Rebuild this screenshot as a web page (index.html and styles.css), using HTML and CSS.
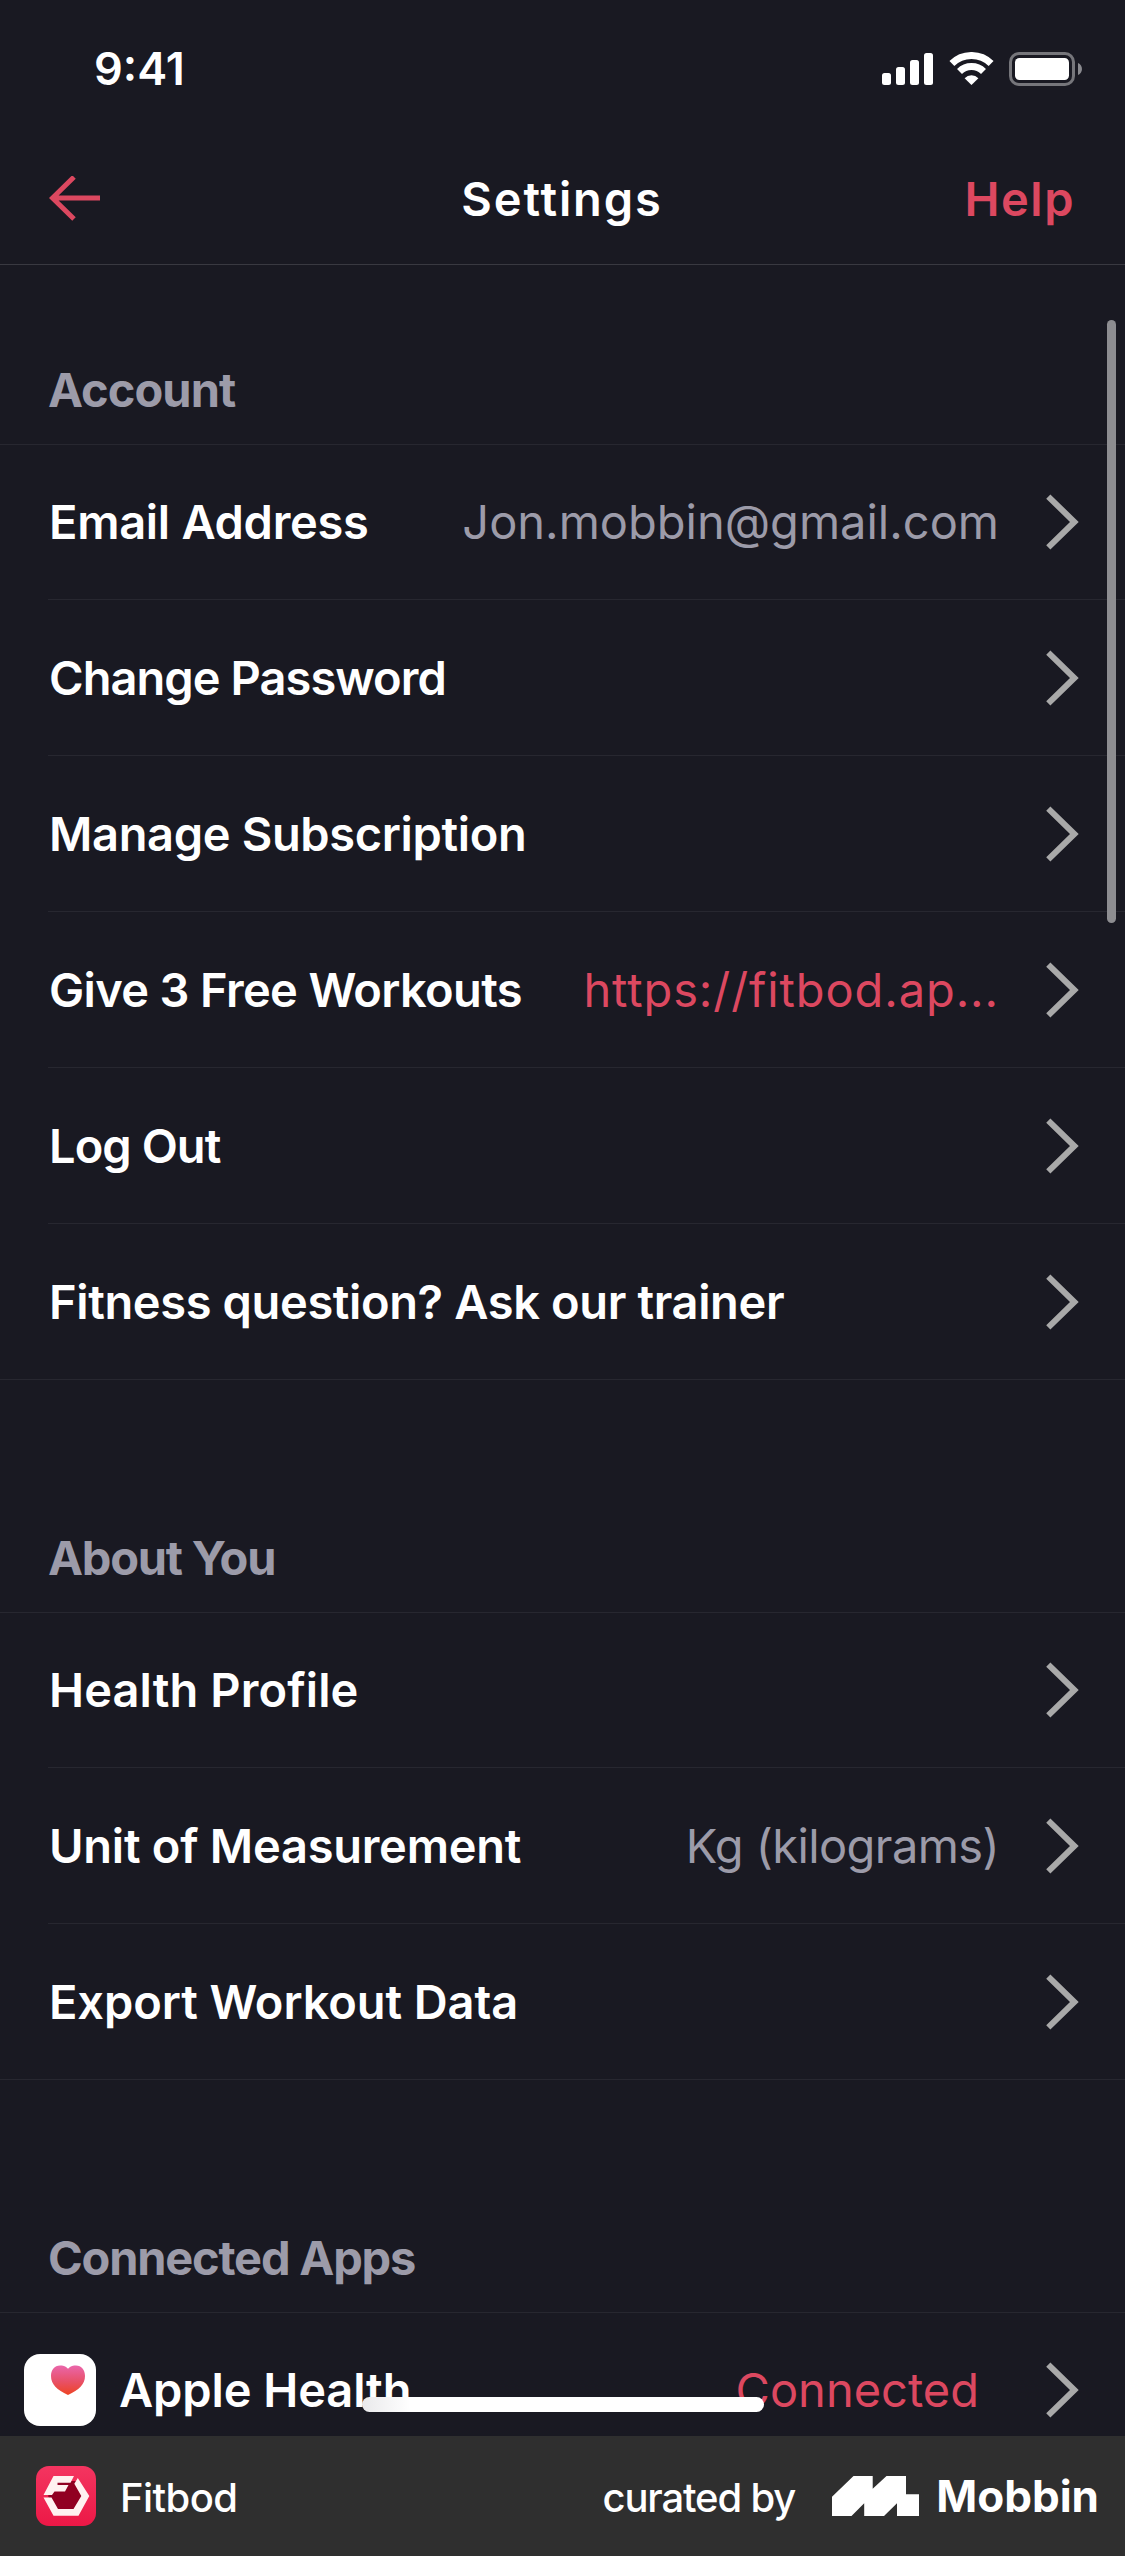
FILE: index.html
```html
<!DOCTYPE html>
<html lang="en">
<head>
<meta charset="utf-8">
<meta name="viewport" content="width=device-width">
<title>Settings</title>
<link rel="stylesheet" href="styles.css">
</head>
<body>
<svg class="defs" aria-hidden="true">
  <symbol id="chevron" viewBox="0 0 33 56"><path d="M2.3 2.6 28.4 28 2.3 53.4" fill="none" stroke="#a9a9a9" stroke-width="6"/></symbol>
</svg>
<div class="screen">
  <header class="top">
    <div class="status">
      <span class="time">9:41</span>
      <div class="status-icons">
        <svg class="signal" viewBox="0 0 51 34" fill="#fff"><rect y="21" width="9" height="12" rx="2.5"/><rect x="14" y="15" width="9" height="18" rx="2.5"/><rect x="28" y="8" width="9" height="25" rx="2.5"/><rect x="42" y="1" width="9" height="32" rx="2.5"/></svg>
        <svg class="wifi" viewBox="0 0 45 34"><path d="M2.9 11.5A28 28 0 0 1 42.1 11.5M10.5 19.4A17 17 0 0 1 34.5 19.4" fill="none" stroke="#fff" stroke-width="7"/><path d="M22.5 33 15.6 26.2A9.8 9.8 0 0 1 29.4 26.2Z" fill="#fff"/></svg>
        <svg class="battery" viewBox="0 0 74 34"><rect x="1.5" y="1.5" width="63" height="31" rx="8.5" fill="none" stroke="#76767b" stroke-width="3"/><rect x="6" y="6" width="54" height="22" rx="4.5" fill="#fff"/><path d="M69 11c5.300 2 5.300 10 0 12z" fill="#8a8a8f"/></svg>
      </div>
    </div>
    <nav class="nav">
      <svg class="back" viewBox="0 0 52 46" fill="none" stroke="#dc4860" stroke-width="5"><path d="M3 22H51M25 1 3.500 22 25 43"/></svg>
      <h1 class="title">Settings</h1>
      <a class="help">Help</a>
    </nav>
  </header>
  <main class="list">
    <h2 class="section first t-account">Account</h2>
    <div class="row short"><span class="label t-email">Email Address</span><span class="value">Jon.mobbin@gmail.com</span><svg class="chev"><use href="#chevron"/></svg></div>
    <div class="row"><span class="label t-password">Change Password</span><svg class="chev"><use href="#chevron"/></svg></div>
    <div class="row"><span class="label t-manage">Manage Subscription</span><svg class="chev"><use href="#chevron"/></svg></div>
    <div class="row"><span class="label t-give">Give 3 Free Workouts</span><span class="value link t-url">https://fitbod.ap...</span><svg class="chev"><use href="#chevron"/></svg></div>
    <div class="row"><span class="label t-logout">Log Out</span><svg class="chev"><use href="#chevron"/></svg></div>
    <div class="row last"><span class="label t-fitness">Fitness question? Ask our trainer</span><svg class="chev"><use href="#chevron"/></svg></div>

    <h2 class="section t-about">About You</h2>
    <div class="row short"><span class="label t-health">Health Profile</span><svg class="chev"><use href="#chevron"/></svg></div>
    <div class="row"><span class="label t-unit">Unit of Measurement</span><span class="value t-kg">Kg (kilograms)</span><svg class="chev"><use href="#chevron"/></svg></div>
    <div class="row last"><span class="label t-export">Export Workout Data</span><svg class="chev"><use href="#chevron"/></svg></div>

    <h2 class="section t-connected">Connected Apps</h2>
    <div class="row app">
      <svg class="health" viewBox="0 0 72 72"><defs><linearGradient id="heart" x1="0" y1="0" x2="0" y2="1"><stop offset="0" stop-color="#ea66ab"/><stop offset=".55" stop-color="#e85066"/><stop offset="1" stop-color="#ee4423"/></linearGradient></defs><rect width="72" height="72" rx="16" fill="#fff"/><path d="M44 14.700C41.500 12 38.500 11.500 36 11.500 30.500 11.500 27 16 27 22 27 30 33 36 44 41 55 36 61 30 61 22 61 16 57.500 11.500 52 11.500 49.500 11.500 46.500 12 44 14.700Z" fill="url(#heart)"/></svg>
      <span class="label t-apple">Apple Health</span><span class="value link status-value">Connected</span><svg class="chev"><use href="#chevron"/></svg>
    </div>
  </main>
  <footer class="credit">
    <svg class="fitbod" viewBox="0 0 60 60"><defs><linearGradient id="tile" x1="0" y1="0" x2="0" y2="1"><stop offset="0" stop-color="#f43560"/><stop offset="1" stop-color="#ec1846"/></linearGradient></defs><rect width="60" height="60" rx="13" fill="url(#tile)"/><path d="M22 15H40L47 30 39 45H20L12 30Z" fill="#910022"/><path d="M17.500 10H38L34.500 16.800H21.500V19H32.500L29 25.500H18.500L16 29H7.500Z" fill="#fff1f0"/><path d="M41.800 12 53.300 30 42.500 49.700H17.500L7.500 31.500H15.500L22 43H37.500L45.300 30 38.300 17.800Z" fill="#fff1f0"/></svg>
    <span class="app-name">Fitbod</span>
    <span class="curated">curated by</span>
    <svg class="logo" viewBox="0 0 87 40"><path d="M0 40V20.700L21.500 0H40.700V12.700L54.500 0H74V18.300H87V40H65V27.300L52 40H32.200V27.300L19.500 40Z" fill="#fff"/></svg>
    <span class="mobbin">Mobbin</span>
  </footer>
  <div class="scrollbar"></div>
  <div class="home"></div>
</div>
</body>
</html>
```
FILE: styles.css
```css
* { box-sizing: border-box; }

body {
  margin: 0;
  background: #191922;
  color: #fff;
  font-family: Inter, "Liberation Sans", sans-serif;
  font-size: 47px;
  line-height: 60px;
}

h1, h2 { margin: 0; font-size: inherit; }
svg { display: block; flex: none; }
.defs { display: none; }

.screen {
  position: relative;
  display: flex;
  flex-direction: column;
  width: 1125px;
  height: 2556px;
  overflow: hidden;
}

/* Status bar and navigation */
.top { height: 265px; flex: none; border-bottom: 1px solid #393941; }
.status {
  display: flex;
  align-items: center;
  justify-content: space-between;
  height: 138px;
  padding: 0 42px 0 94px;
}
.time { font-size: 45px; font-weight: 600; }
.status-icons { display: flex; gap: 15px; }
.signal { width: 51px; height: 34px; margin-right: 1px; }
.wifi { width: 45px; height: 34px; }
.battery { width: 74px; height: 34px; }

.nav {
  display: grid;
  grid-template-columns: 1fr auto 1fr;
  align-items: center;
  height: 122px;
  padding: 0 50px 0 49px;
}
.back { width: 52px; height: 46px; }
.title { font-weight: 600; letter-spacing: 1.9px; }
.help { justify-self: end; color: #dc4860; font-weight: 600; letter-spacing: 1.5px; }

/* Settings list */
.list { flex: 1; min-height: 0; overflow: hidden; }
.section {
  display: flex;
  align-items: flex-end;
  height: 233px;
  padding: 0 48px 24px;
  border-bottom: 1px solid #272730;
  color: #9c9ba9;
  font-weight: 700;
}
.section.first { height: 180px; }
.row {
  display: flex;
  align-items: center;
  height: 156px;
  margin-left: 48px;
  padding: 0 46px 0 1px;
  border-bottom: 1px solid #272730;
  white-space: nowrap;
}
.row.short { height: 155px; }
.row.last { margin-left: 0; padding-left: 49px; }
.label { font-weight: 600; }
.value { margin-left: auto; color: #9c9ba9; }
.link { color: #dc4860; }
.chev { width: 33px; height: 56px; margin-left: auto; }
.value + .chev { margin-left: 47px; }
.row.app { height: 155px; margin-left: 0; padding-left: 24px; }
.health { width: 72px; height: 72px; margin-right: 23px; }
.status-value + .chev { margin-left: 67px; }

/* Tracking of individual strings */
.t-account { letter-spacing: -.95px; }
.t-about { letter-spacing: -1.25px; }
.t-connected { letter-spacing: -1.2px; }
.t-email { letter-spacing: -.3px; }
.t-password { letter-spacing: -.95px; }
.t-manage { letter-spacing: -.35px; }
.t-give { letter-spacing: -.65px; }
.t-logout { letter-spacing: -.95px; }
.t-fitness { letter-spacing: -.37px; }
.t-health { letter-spacing: .1px; }
.t-unit { letter-spacing: -.25px; }
.t-export { letter-spacing: -.1px; }
.t-apple { letter-spacing: -.1px; }
.t-url { letter-spacing: .9px; }
.t-kg { letter-spacing: -.6px; }

/* Credit bar */
.credit {
  display: flex;
  align-items: center;
  flex: none;
  height: 120px;
  padding: 0 26px 0 36px;
  background: #2f2f2f;
  font-size: 40px;
  font-weight: 500;
}
.fitbod { width: 60px; height: 60px; margin-right: 24px; }
.app-name { letter-spacing: -.6px; padding-top: 3px; }
.curated { margin-left: auto; letter-spacing: -1.15px; padding-top: 3px; }
.logo { width: 87px; height: 40px; margin: 0 17px 0 37px; }
.mobbin { font-size: 44px; font-weight: 700; letter-spacing: 0; }

/* Overlays */
.scrollbar {
  position: absolute;
  top: 320px;
  right: 9px;
  width: 9px;
  height: 603px;
  border-radius: 5px;
  background: #8d8d91;
}
.home {
  position: absolute;
  top: 2397px;
  left: 362px;
  width: 402px;
  height: 15px;
  border-radius: 8px;
  background: linear-gradient(90deg, #e9e9eb, #fff 12%);
}
```
